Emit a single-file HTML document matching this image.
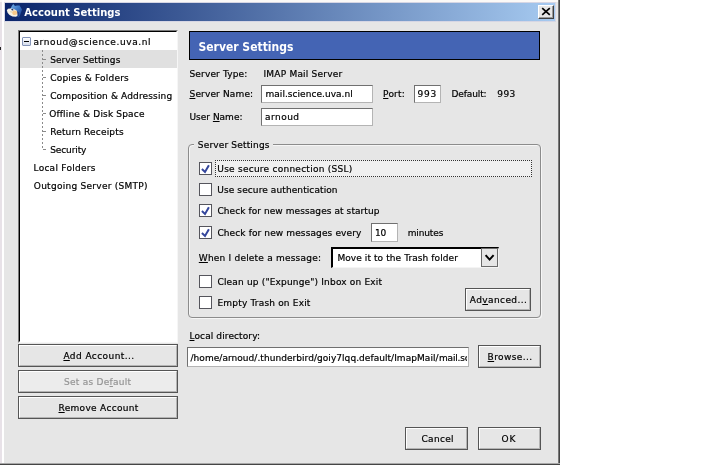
<!DOCTYPE html>
<html><head><meta charset="utf-8"><title>Account Settings</title>
<style>
html,body{margin:0;padding:0;background:#fff;}
body{width:725px;height:465px;position:relative;overflow:hidden;font-family:"DejaVu Sans","Liberation Sans",sans-serif;font-size:9px;color:#000;}
div,span,svg{position:absolute;box-sizing:border-box;}
#win{left:0;top:0;width:560px;height:465px;background:#e6e6e6;}
#title{left:5px;top:3px;width:550px;height:18px;background:linear-gradient(to right,#0a246a 0%,#a6caf0 100%);}
.t{white-space:pre;line-height:12px;height:12px;font-size:9px;-webkit-text-stroke:0.2px currentColor;}
.t.tb{-webkit-text-stroke:0;color:#fff;font-weight:bold;font-size:10px;line-height:13px;height:13px;}
.t.hb{-webkit-text-stroke:0;color:#fff;font-family:"DejaVu Sans Condensed","DejaVu Sans",sans-serif;font-weight:bold;font-size:12px;line-height:15px;height:15px;}
.t.dis{color:#959595;}
u{text-decoration:underline;}
#tree{left:18px;top:30px;width:160px;height:313px;background:#fff;border:1px solid;border-color:#7a7a7a #f6f6f6 #f6f6f6 #7a7a7a;}
#tree div{left:0;top:0;width:158px;height:311px;border:1px solid;border-color:#000 #fff #fff #000;}
.inp{background:#fff;border:1px solid;border-color:#707070 #b4b4b4 #b4b4b4 #707070;}
.btn{background:#e6e6e6;border:1px solid #555;}
.btn div{left:0;top:0;right:0;bottom:0;border:1px solid;border-color:#fff #b4b4b4 #b4b4b4 #fff;}
.cb{width:13px;height:13px;background:#fff;border:1px solid #55555c;}
#hdr{left:189px;top:31px;width:351px;height:29px;background:#4464b4;border:1px solid #000;}
#grp{left:188px;top:144px;width:353px;height:174px;border:1px solid #8c8c8c;border-radius:4px;box-shadow:1px 1px 0 #f6f6f6, inset 1px 1px 0 #f6f6f6;}
</style></head><body>
<div id="root" style="left:0;top:0;width:725px;height:465px;will-change:transform;">
<div id="win"></div>
<div style="left:0;top:0;width:2px;height:463px;background:#e8e2e8;"></div>
<div style="left:0;top:0;width:558px;height:2px;background:#fbf9f7;"></div>
<div style="left:2px;top:0;width:2px;height:463px;background:#fff;"></div>
<div style="left:4px;top:2px;width:552px;height:20px;background:#d6d6e4;"></div>
<div style="left:558px;top:0;width:2px;height:465px;background:#454545;border-left:1px solid #787878;"></div>
<div style="left:0;top:463px;width:560px;height:2px;background:#454545;border-top:1px solid #a8a8a8;"></div>
<div style="left:0;top:47px;width:1px;height:3px;background:#222;"></div>
<div id="title"></div>
<svg style="left:4px;top:2px;" width="20" height="20" viewBox="4 2 20 20">
 <defs><linearGradient id="bg" x1="0" y1="0" x2="1" y2="1"><stop offset="0" stop-color="#78b4ec"/><stop offset="0.5" stop-color="#3a74c4"/><stop offset="1" stop-color="#173a8c"/></linearGradient></defs>
 <path d="M10.3 9.5 L11.5 6.5 L13.2 4.1 L15 6 L17 5.6 L19.6 5.4 L20.8 7.6 L22 9.6 L21 12.5 L20 15.5 L18.5 17.2 L16.5 16 L17 11.5 L13.5 8.8 Z" fill="url(#bg)"/>
 <path d="M6.8 10.2 L8 8.8 L10.5 8.6 L13.5 8.8 L16.5 10.5 L18.2 13 L18 15.6 L16 16.8 L12.5 16.4 L9.5 15 L7.6 12.8 Z" fill="#f6f2e6"/>
 <ellipse cx="14.8" cy="12.8" rx="2.6" ry="2.3" fill="#f6c88a"/>
 <path d="M11 9.2 L13 8.8 L13.6 10.2 L12 10.6 Z" fill="#28386a"/>
 <path d="M10 11.5 L11.5 11.2 L12 12.4 L10.6 12.6 Z" fill="#d8c8a0"/>
 <path d="M17.2 11 L18.8 12.5 L18.6 16 L17.6 16.6 Z" fill="#14286c"/>
</svg>
<div class="btn" style="left:538px;top:5px;width:16px;height:14px;border-color:#fff #404040 #404040 #fff;box-shadow:inset -1px -1px 0 #9a9a9a;"></div>
<svg style="left:538px;top:5px;" width="16" height="14" viewBox="0 0 16 14"><path d="M4.2 3.2 L11.8 9.8 M11.8 3.2 L4.2 9.8" stroke="#000" stroke-width="1.7" fill="none"/></svg>

<div id="tree"><div></div></div>
<div style="left:20px;top:50px;width:157px;height:18px;background:#e0e0e0;"></div>
<div style="left:22px;top:37px;width:9px;height:9px;border:1px solid #8494b8;border-radius:1px;background:linear-gradient(#fff,#d4dcec);"></div>
<div style="left:24px;top:41px;width:5px;height:1px;background:#000;"></div>
<div style="left:42px;top:50px;width:1px;height:100px;background:repeating-linear-gradient(to bottom,#8a8a8a 0,#8a8a8a 2px,transparent 2px,transparent 4px);"></div>
<div style="left:43px;top:59px;width:3px;height:1px;background:#8a8a8a;"></div>
<div style="left:43px;top:77px;width:3px;height:1px;background:#8a8a8a;"></div>
<div style="left:43px;top:95px;width:3px;height:1px;background:#8a8a8a;"></div>
<div style="left:43px;top:113px;width:3px;height:1px;background:#8a8a8a;"></div>
<div style="left:43px;top:131px;width:3px;height:1px;background:#8a8a8a;"></div>
<div style="left:43px;top:149px;width:3px;height:1px;background:#8a8a8a;"></div>

<div class="btn" style="left:18px;top:344px;width:160px;height:23px;"><div></div></div>
<div class="btn" style="left:18px;top:370px;width:160px;height:23px;background:#ececec;"><div></div></div>
<div class="btn" style="left:18px;top:396px;width:160px;height:23px;"><div></div></div>

<div id="hdr"></div>
<div class="inp" style="left:261px;top:85px;width:112px;height:18px;"></div>
<div class="inp" style="left:414px;top:85px;width:27px;height:18px;"></div>
<div class="inp" style="left:261px;top:108px;width:112px;height:18px;"></div>

<div id="grp"></div>
<div style="left:194px;top:140px;width:79px;height:12px;background:#e6e6e6;"></div>
<div style="left:215px;top:160px;width:317px;height:17px;border:1px dotted #333;background:#f0f0f0;"></div>
<div class="cb" style="left:199px;top:162px;"></div>
<div class="cb" style="left:199px;top:183px;"></div>
<div class="cb" style="left:199px;top:204px;"></div>
<div class="cb" style="left:199px;top:226px;"></div>
<div class="cb" style="left:199px;top:275px;"></div>
<div class="cb" style="left:199px;top:296px;"></div>
<svg style="left:199px;top:162px;" width="13" height="13" viewBox="0 0 13 13"><path d="M2.9 7 L6 10 L9.9 3.3" stroke="#34469c" stroke-width="2" fill="none"/></svg>
<svg style="left:199px;top:204px;" width="13" height="13" viewBox="0 0 13 13"><path d="M2.9 7 L6 10 L9.9 3.3" stroke="#34469c" stroke-width="2" fill="none"/></svg>
<svg style="left:199px;top:226px;" width="13" height="13" viewBox="0 0 13 13"><path d="M2.9 7 L6 10 L9.9 3.3" stroke="#34469c" stroke-width="2" fill="none"/></svg>
<div class="inp" style="left:371px;top:223px;width:27px;height:19px;"></div>
<div class="inp" style="left:331px;top:247px;width:168px;height:21px;border-color:#000 #f4f4f4 #f4f4f4 #000;border-top-width:2px;border-left-width:2px;"></div>
<div class="btn" style="left:481px;top:248px;width:17px;height:19px;border-color:#6a6a6a;"></div>
<svg style="left:481px;top:249px;" width="17" height="17" viewBox="0 0 17 17"><path d="M4.6 6.2 L8.6 10.6 L12.6 6.2" stroke="#000" stroke-width="2" fill="none"/></svg>
<div class="btn" style="left:465px;top:288px;width:66px;height:23px;"><div></div></div>

<div class="inp" style="left:187px;top:347px;width:282px;height:20px;"></div>
<span class="t" style="left:439px;top:352px;width:28px;overflow:hidden;letter-spacing:-0.2px;">mail.science.uva.nl</span>
<div class="btn" style="left:478px;top:345px;width:63px;height:23px;"><div></div></div>
<div class="btn" style="left:405px;top:427px;width:63px;height:23px;"><div></div></div>
<div class="btn" style="left:478px;top:427px;width:63px;height:23px;"><div></div></div>
<span class="t tb" style="left:24.3px;top:6px;letter-spacing:0.00px;">Account Settings</span>
<span class="t" style="left:33.5px;top:36px;letter-spacing:0.60px;">arnoud@science.uva.nl</span>
<span class="t" style="left:50.2px;top:54px;letter-spacing:0.06px;">Server Settings</span>
<span class="t" style="left:50.2px;top:72px;letter-spacing:0.21px;">Copies &amp; Folders</span>
<span class="t" style="left:50.2px;top:90px;letter-spacing:0.14px;">Composition &amp; Addressing</span>
<span class="t" style="left:49.2px;top:108px;letter-spacing:0.17px;">Offline &amp; Disk Space</span>
<span class="t" style="left:50.2px;top:126px;letter-spacing:0.17px;">Return Receipts</span>
<span class="t" style="left:50.2px;top:144px;letter-spacing:-0.11px;">Security</span>
<span class="t" style="left:33.5px;top:162px;letter-spacing:0.27px;">Local Folders</span>
<span class="t" style="left:33.8px;top:180px;letter-spacing:0.27px;">Outgoing Server (SMTP)</span>
<span class="t" style="left:63.4px;top:350px;letter-spacing:0.43px;"><u>A</u>dd Account...</span>
<span class="t dis" style="left:64.1px;top:376px;letter-spacing:0.25px;">Set as De<u>f</u>ault</span>
<span class="t" style="left:58.5px;top:402px;letter-spacing:0.31px;"><u>R</u>emove Account</span>
<span class="t hb" style="left:198.5px;top:40px;letter-spacing:0.00px;">Server Settings</span>
<span class="t" style="left:189.5px;top:68px;letter-spacing:0.15px;">Server Type:</span>
<span class="t" style="left:263.5px;top:68px;letter-spacing:0.21px;">IMAP Mail Server</span>
<span class="t" style="left:189.5px;top:88px;letter-spacing:0.15px;"><u>S</u>erver Name:</span>
<span class="t" style="left:265.5px;top:88px;letter-spacing:0.04px;">mail.science.uva.nl</span>
<span class="t" style="left:383.1px;top:88px;letter-spacing:0.20px;"><u>P</u>ort:</span>
<span class="t" style="left:417.4px;top:88px;letter-spacing:0.80px;">993</span>
<span class="t" style="left:451.5px;top:88px;letter-spacing:-0.11px;">Default:</span>
<span class="t" style="left:497.3px;top:88px;letter-spacing:0.40px;">993</span>
<span class="t" style="left:189.5px;top:111px;letter-spacing:0.00px;">User <u>N</u>ame:</span>
<span class="t" style="left:265.0px;top:111px;letter-spacing:0.48px;">arnoud</span>
<span class="t" style="left:197.8px;top:139px;letter-spacing:0.17px;">Server Settings</span>
<span class="t" style="left:217.3px;top:163px;letter-spacing:0.25px;">Use secure connection (SSL)</span>
<span class="t" style="left:217.3px;top:184px;letter-spacing:0.10px;">Use secure authentication</span>
<span class="t" style="left:217.4px;top:205px;letter-spacing:0.08px;">Check for new messages at startup</span>
<span class="t" style="left:217.4px;top:227px;letter-spacing:0.12px;">Check for new messages every</span>
<span class="t" style="left:374.9px;top:227px;letter-spacing:0.00px;">10</span>
<span class="t" style="left:407.7px;top:227px;letter-spacing:-0.13px;">minutes</span>
<span class="t" style="left:198.8px;top:252px;letter-spacing:0.21px;"><u>W</u>hen I delete a message:</span>
<span class="t" style="left:337.4px;top:252px;letter-spacing:0.09px;">Move it to the Trash folder</span>
<span class="t" style="left:217.5px;top:276px;letter-spacing:0.17px;">Clean up ("Expunge") Inbox on Exit</span>
<span class="t" style="left:217.5px;top:297px;letter-spacing:0.18px;">Empty Trash on Exit</span>
<span class="t" style="left:469.8px;top:294px;letter-spacing:0.40px;">Ad<u>v</u>anced...</span>
<span class="t" style="left:189.5px;top:330px;letter-spacing:0.11px;"><u>L</u>ocal directory:</span>
<span class="t" style="left:190.5px;top:352px;letter-spacing:0.05px;">/home/arnoud/.thunderbird/goiy7lqq.default/ImapMail/</span>
<span class="t" style="left:487.6px;top:351px;letter-spacing:0.40px;"><u>B</u>rowse...</span>
<span class="t" style="left:421.5px;top:433px;letter-spacing:0.32px;">Cancel</span>
<span class="t" style="left:501.5px;top:433px;letter-spacing:0.80px;">OK</span>
</div>
</body></html>
